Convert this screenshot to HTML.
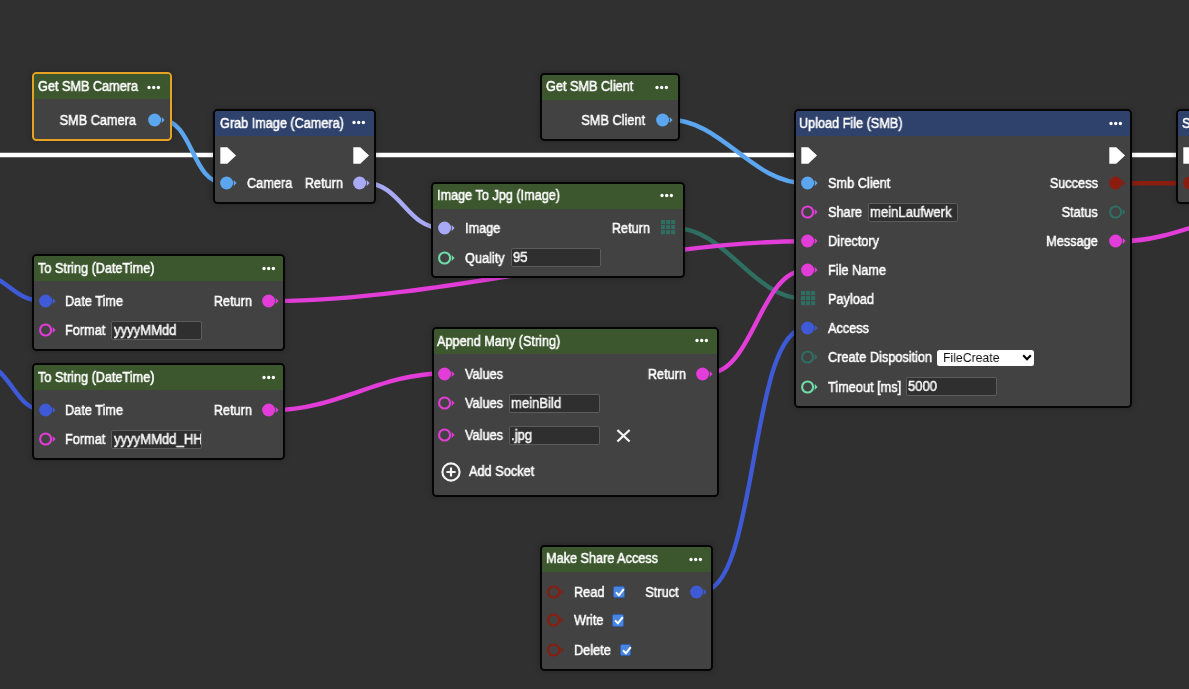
<!DOCTYPE html>
<html><head><meta charset="utf-8"><style>
html,body{margin:0;padding:0;width:1189px;height:689px;overflow:hidden;background:#303030;font-family:"Liberation Sans", sans-serif;}
.wires{position:absolute;left:0;top:0;}
.node{position:absolute;box-sizing:border-box;border:2px solid #050505;border-radius:4.5px;background:#424242;overflow:hidden;box-shadow:0 0 6px rgba(0,0,0,0.25);}
.hdr{position:relative;}
.ttl{position:absolute;top:4.5px;font-size:14.0px;line-height:15px;color:#ffffff;white-space:nowrap;transform:scaleX(0.905);transform-origin:0 0;will-change:transform;-webkit-text-stroke:0.5px currentColor;}
.dots{position:absolute;right:7.4px;top:9.3px;}
.s{position:absolute;overflow:visible;}
.lbl{position:absolute;line-height:20px;white-space:nowrap;transform:scaleX(0.91);transform-origin:0 0;will-change:transform;-webkit-text-stroke:0.5px currentColor;}
.lbl.r{transform-origin:100% 0;}
.inp{position:absolute;box-sizing:border-box;border:1px solid #5c5c5c;border-radius:2px;background:#2f2f2f;}
.inp span{position:absolute;left:0.9px;top:0px;line-height:17px;font-size:14.0px;color:#f6f6f6;white-space:nowrap;transform:scaleX(0.935);transform-origin:0 0;will-change:transform;-webkit-text-stroke:0.5px currentColor;}
.sel{position:absolute;box-sizing:border-box;background:#fff;border-radius:2.5px;}
.sel span{position:absolute;left:5.2px;top:0px;line-height:16px;font-size:13.6px;color:#111;transform:scaleX(0.9);transform-origin:0 0;will-change:transform;}
.cb{position:absolute;width:11.6px;height:12.2px;background:#4a86e0;border-radius:2px;border:0.6px solid #2e5fb0;box-sizing:border-box}
.cb svg{position:absolute;left:-0.3px;top:0;}
</style></head><body>
<svg class="wires" width="1189" height="689" viewBox="0 0 1189 689"><path d="M-10 155 H1189" stroke="#ffffff" stroke-width="4.4" fill="none"/><path d="M1120 183.2 H1189" stroke="#8b1d10" stroke-width="4.6" fill="none"/><path d="M159.8 119.5 C193.782 119.5 190.718 183 224.7 183" stroke="#5ca6f0" stroke-width="4.4" fill="none"/><path d="M364.7 183 C401.29200000000003 183 406.20799999999997 228.4 442.8 228.4" stroke="#a8aaf5" stroke-width="4.4" fill="none"/><path d="M667.8 119.5 C722.2339999999999 119.5 751.2660000000001 183.2 805.7 183.2" stroke="#5ca6f0" stroke-width="4.4" fill="none"/><path d="M673.0 227.8 C726.428 227.8 752.272 299.0 805.7 299.0" stroke="#2f6e61" stroke-width="4.4" fill="none"/><path d="M273.9 301 C438.392 301 641.2080000000001 241.2 805.7 241.2" stroke="#e23dd8" stroke-width="4.4" fill="none"/><path d="M273.9 410.2 C335.31 410.2 381.09 373.5 442.5 373.5" stroke="#e23dd8" stroke-width="4.4" fill="none"/><path d="M707.5 373.5 C753.188 373.5 760.0120000000001 270.3 805.7 270.3" stroke="#e23dd8" stroke-width="4.4" fill="none"/><path d="M701.6 591.5 C758.546 591.5 748.754 328.2 805.7 328.2" stroke="#3e5ad6" stroke-width="4.4" fill="none"/><path d="M1120.7 241.2 C1179.296 241.2 1221.404 208 1280 208" stroke="#e23dd8" stroke-width="4.4" fill="none"/><path d="M-24 274 C8.576 274 11.124000000000002 301 43.7 301" stroke="#3e5ad6" stroke-width="4.4" fill="none"/><path d="M-21 364 C12.472000000000001 364 12.228000000000002 410.6 45.7 410.6" stroke="#3e5ad6" stroke-width="4.4" fill="none"/></svg>
<div class="node" style="left:32px;top:72px;width:139.6px;height:69px;border-color:#e6a323"><div class="hdr" style="height:25.0px;background:#3c572d"><span class="ttl" style="left:4.2px">Get SMB Camera</span></div></div>
<svg class="s" style="left:147.2px;top:84.5px" width="13.6" height="5" viewBox="0 0 13.6 5"><circle cx="2" cy="2.5" r="1.65" fill="#fff"/><circle cx="6.7" cy="2.5" r="1.65" fill="#fff"/><circle cx="11.4" cy="2.5" r="1.65" fill="#fff"/></svg>
<svg class="s" style="left:147.8px;top:110.5px" width="18" height="18" viewBox="0 0 18 18"><circle cx="6.6" cy="9" r="6.5" fill="#5ca6f0"/><path d="M13.7 5.9 L16.6 9 L13.7 12.1 Z" fill="#5ca6f0"/></svg>
<span class="lbl r" style="right:1052.7px;top:109.5px;font-size:14.0px;color:#ffffff">SMB Camera</span>
<div class="node" style="left:213px;top:109px;width:163px;height:95px;border-color:#050505"><div class="hdr" style="height:25.0px;background:#2f426c"><span class="ttl" style="left:5.0px">Grab Image (Camera)</span></div></div>
<svg class="s" style="left:352.3px;top:120.3px" width="13.6" height="5" viewBox="0 0 13.6 5"><circle cx="2" cy="2.5" r="1.65" fill="#fff"/><circle cx="6.7" cy="2.5" r="1.65" fill="#fff"/><circle cx="11.4" cy="2.5" r="1.65" fill="#fff"/></svg>
<svg class="s" style="left:220px;top:146.5px" width="17" height="17" viewBox="0 0 17 17"><path d="M0.3 0.25 H7.3 L16.0 8.5 L7.3 16.75 H0.3 Z" fill="#fff"/></svg>
<svg class="s" style="left:352.5px;top:146.5px" width="17" height="17" viewBox="0 0 17 17"><path d="M0.3 0.25 H7.3 L16.0 8.5 L7.3 16.75 H0.3 Z" fill="#fff"/></svg>
<svg class="s" style="left:220px;top:174px" width="18" height="18" viewBox="0 0 18 18"><circle cx="6.6" cy="9" r="6.5" fill="#5ca6f0"/><path d="M13.7 5.9 L16.6 9 L13.7 12.1 Z" fill="#5ca6f0"/></svg>
<span class="lbl" style="left:246.9px;top:173px;font-size:14.0px;color:#ffffff">Camera</span>
<svg class="s" style="left:352.7px;top:174px" width="18" height="18" viewBox="0 0 18 18"><circle cx="6.6" cy="9" r="6.5" fill="#a8aaf5"/><path d="M13.7 5.9 L16.6 9 L13.7 12.1 Z" fill="#a8aaf5"/></svg>
<span class="lbl r" style="right:846.4px;top:173px;font-size:14.0px;color:#ffffff">Return</span>
<div class="node" style="left:540px;top:72.5px;width:139.5px;height:68.2px;border-color:#050505"><div class="hdr" style="height:25.0px;background:#3c572d"><span class="ttl" style="left:4.2px">Get SMB Client</span></div></div>
<svg class="s" style="left:655.4px;top:84.5px" width="13.6" height="5" viewBox="0 0 13.6 5"><circle cx="2" cy="2.5" r="1.65" fill="#fff"/><circle cx="6.7" cy="2.5" r="1.65" fill="#fff"/><circle cx="11.4" cy="2.5" r="1.65" fill="#fff"/></svg>
<svg class="s" style="left:655.8px;top:110.5px" width="18" height="18" viewBox="0 0 18 18"><circle cx="6.6" cy="9" r="6.5" fill="#5ca6f0"/><path d="M13.7 5.9 L16.6 9 L13.7 12.1 Z" fill="#5ca6f0"/></svg>
<span class="lbl r" style="right:544.1px;top:109.5px;font-size:14.0px;color:#ffffff">SMB Client</span>
<div class="node" style="left:431.4px;top:181.5px;width:253.2px;height:96.7px;border-color:#050505"><div class="hdr" style="height:25.0px;background:#3c572d"><span class="ttl" style="left:3.2px">Image To Jpg (Image)</span></div></div>
<svg class="s" style="left:660.4px;top:193.4px" width="13.6" height="5" viewBox="0 0 13.6 5"><circle cx="2" cy="2.5" r="1.65" fill="#fff"/><circle cx="6.7" cy="2.5" r="1.65" fill="#fff"/><circle cx="11.4" cy="2.5" r="1.65" fill="#fff"/></svg>
<svg class="s" style="left:438.1px;top:219.4px" width="18" height="18" viewBox="0 0 18 18"><circle cx="6.6" cy="9" r="6.5" fill="#a8aaf5"/><path d="M13.7 5.9 L16.6 9 L13.7 12.1 Z" fill="#a8aaf5"/></svg>
<span class="lbl" style="left:464.90000000000003px;top:218.4px;font-size:14.0px;color:#ffffff">Image</span>
<span class="lbl r" style="right:538.5px;top:218.4px;font-size:14.0px;color:#ffffff">Return</span>
<svg class="s" style="left:661px;top:220.1px" width="15" height="15" viewBox="0 0 15 15"><rect x="0.0" y="0.0" width="4.1" height="4.1" fill="#2f6e61"/><rect x="5.05" y="0.0" width="4.1" height="4.1" fill="#2f6e61"/><rect x="10.1" y="0.0" width="4.1" height="4.1" fill="#2f6e61"/><rect x="0.0" y="5.05" width="4.1" height="4.1" fill="#2f6e61"/><rect x="5.05" y="5.05" width="4.1" height="4.1" fill="#2f6e61"/><rect x="10.1" y="5.05" width="4.1" height="4.1" fill="#2f6e61"/><rect x="0.0" y="10.1" width="4.1" height="4.1" fill="#2f6e61"/><rect x="5.05" y="10.1" width="4.1" height="4.1" fill="#2f6e61"/><rect x="10.1" y="10.1" width="4.1" height="4.1" fill="#2f6e61"/></svg>
<svg class="s" style="left:438.1px;top:248.60000000000002px" width="18" height="18" viewBox="0 0 18 18"><circle cx="6.6" cy="9" r="5.5" fill="none" stroke="#6fdda8" stroke-width="2.1"/><path d="M13.7 5.9 L16.6 9 L13.7 12.1 Z" fill="#6fdda8"/></svg>
<span class="lbl" style="left:464.90000000000003px;top:247.60000000000002px;font-size:14.0px;color:#ffffff">Quality</span>
<div class="inp" style="left:511.1px;top:248.4px;width:90.2px;height:18.6px;overflow:hidden"><span style="margin-left:0px">95</span></div>
<div class="node" style="left:794.3px;top:109.1px;width:337.7px;height:298.6px;border-color:#050505"><div class="hdr" style="height:25.0px;background:#2f426c"><span class="ttl" style="left:3.2px">Upload File (SMB)</span></div></div>
<svg class="s" style="left:1108.6px;top:120.5px" width="13.6" height="5" viewBox="0 0 13.6 5"><circle cx="2" cy="2.5" r="1.65" fill="#fff"/><circle cx="6.7" cy="2.5" r="1.65" fill="#fff"/><circle cx="11.4" cy="2.5" r="1.65" fill="#fff"/></svg>
<svg class="s" style="left:801px;top:146.5px" width="17" height="17" viewBox="0 0 17 17"><path d="M0.3 0.25 H7.3 L16.0 8.5 L7.3 16.75 H0.3 Z" fill="#fff"/></svg>
<svg class="s" style="left:1108.5px;top:146.5px" width="17" height="17" viewBox="0 0 17 17"><path d="M0.3 0.25 H7.3 L16.0 8.5 L7.3 16.75 H0.3 Z" fill="#fff"/></svg>
<svg class="s" style="left:801px;top:174.2px" width="18" height="18" viewBox="0 0 18 18"><circle cx="6.6" cy="9" r="6.5" fill="#5ca6f0"/><path d="M13.7 5.9 L16.6 9 L13.7 12.1 Z" fill="#5ca6f0"/></svg>
<span class="lbl" style="left:827.5999999999999px;top:173.2px;font-size:14.0px;color:#ffffff">Smb Client</span>
<svg class="s" style="left:801px;top:203.2px" width="18" height="18" viewBox="0 0 18 18"><circle cx="6.6" cy="9" r="5.5" fill="none" stroke="#e23dd8" stroke-width="2.1"/><path d="M13.7 5.9 L16.6 9 L13.7 12.1 Z" fill="#e23dd8"/></svg>
<span class="lbl" style="left:827.5999999999999px;top:202.2px;font-size:14.0px;color:#ffffff">Share</span>
<div class="inp" style="left:867.7px;top:203px;width:90.5px;height:19px;overflow:hidden"><span style="margin-left:0px">meinLaufwerk</span></div>
<svg class="s" style="left:801px;top:232.2px" width="18" height="18" viewBox="0 0 18 18"><circle cx="6.6" cy="9" r="6.5" fill="#e23dd8"/><path d="M13.7 5.9 L16.6 9 L13.7 12.1 Z" fill="#e23dd8"/></svg>
<span class="lbl" style="left:827.5999999999999px;top:231.2px;font-size:14.0px;color:#ffffff">Directory</span>
<svg class="s" style="left:801px;top:261.3px" width="18" height="18" viewBox="0 0 18 18"><circle cx="6.6" cy="9" r="6.5" fill="#e23dd8"/><path d="M13.7 5.9 L16.6 9 L13.7 12.1 Z" fill="#e23dd8"/></svg>
<span class="lbl" style="left:827.5999999999999px;top:260.3px;font-size:14.0px;color:#ffffff">File Name</span>
<svg class="s" style="left:801px;top:290.79999999999995px" width="15" height="15" viewBox="0 0 15 15"><rect x="0.0" y="0.0" width="4.1" height="4.1" fill="#2f6e61"/><rect x="5.05" y="0.0" width="4.1" height="4.1" fill="#2f6e61"/><rect x="10.1" y="0.0" width="4.1" height="4.1" fill="#2f6e61"/><rect x="0.0" y="5.05" width="4.1" height="4.1" fill="#2f6e61"/><rect x="5.05" y="5.05" width="4.1" height="4.1" fill="#2f6e61"/><rect x="10.1" y="5.05" width="4.1" height="4.1" fill="#2f6e61"/><rect x="0.0" y="10.1" width="4.1" height="4.1" fill="#2f6e61"/><rect x="5.05" y="10.1" width="4.1" height="4.1" fill="#2f6e61"/><rect x="10.1" y="10.1" width="4.1" height="4.1" fill="#2f6e61"/></svg>
<span class="lbl" style="left:827.5999999999999px;top:289.3px;font-size:14.0px;color:#ffffff">Payload</span>
<svg class="s" style="left:801px;top:319.2px" width="18" height="18" viewBox="0 0 18 18"><circle cx="6.6" cy="9" r="6.5" fill="#3e5ad6"/><path d="M13.7 5.9 L16.6 9 L13.7 12.1 Z" fill="#3e5ad6"/></svg>
<span class="lbl" style="left:827.5999999999999px;top:318.2px;font-size:14.0px;color:#ffffff">Access</span>
<svg class="s" style="left:801px;top:348.4px" width="18" height="18" viewBox="0 0 18 18"><circle cx="6.6" cy="9" r="5.5" fill="none" stroke="#2f6e61" stroke-width="2.1"/><path d="M13.7 5.9 L16.6 9 L13.7 12.1 Z" fill="#2f6e61"/></svg>
<span class="lbl" style="left:827.5999999999999px;top:347.4px;font-size:14.0px;color:#ffffff">Create Disposition</span>
<div class="sel" style="left:937.4px;top:349.6px;width:97px;height:16.6px"><span>FileCreate</span><svg style="position:absolute;right:2.4px;top:4.6px" width="10" height="7" viewBox="0 0 10 7"><path d="M1.2 1.3 L5 5.2 L8.8 1.3" stroke="#000" stroke-width="2.1" fill="none"/></svg></div>
<svg class="s" style="left:801px;top:377.6px" width="18" height="18" viewBox="0 0 18 18"><circle cx="6.6" cy="9" r="5.5" fill="none" stroke="#6fdda8" stroke-width="2.1"/><path d="M13.7 5.9 L16.6 9 L13.7 12.1 Z" fill="#6fdda8"/></svg>
<span class="lbl" style="left:827.5999999999999px;top:376.6px;font-size:14.0px;color:#ffffff">Timeout [ms]</span>
<div class="inp" style="left:906.3px;top:377.2px;width:90.5px;height:18.5px;overflow:hidden"><span style="margin-left:0px">5000</span></div>
<svg class="s" style="left:1108.7px;top:174.2px" width="18" height="18" viewBox="0 0 18 18"><circle cx="6.6" cy="9" r="6.5" fill="#8b1d10"/><path d="M13.7 5.9 L16.6 9 L13.7 12.1 Z" fill="#8b1d10"/></svg>
<span class="lbl r" style="right:91.40000000000009px;top:173.2px;font-size:14.0px;color:#ffffff">Success</span>
<svg class="s" style="left:1108.7px;top:203.2px" width="18" height="18" viewBox="0 0 18 18"><circle cx="6.6" cy="9" r="5.5" fill="none" stroke="#2f6e61" stroke-width="2.1"/><path d="M13.7 5.9 L16.6 9 L13.7 12.1 Z" fill="#2f6e61"/></svg>
<span class="lbl r" style="right:91.40000000000009px;top:202.2px;font-size:14.0px;color:#ffffff">Status</span>
<svg class="s" style="left:1108.7px;top:232.2px" width="18" height="18" viewBox="0 0 18 18"><circle cx="6.6" cy="9" r="6.5" fill="#e23dd8"/><path d="M13.7 5.9 L16.6 9 L13.7 12.1 Z" fill="#e23dd8"/></svg>
<span class="lbl r" style="right:91.40000000000009px;top:231.2px;font-size:14.0px;color:#ffffff">Message</span>
<div class="node" style="left:1175.6px;top:109px;width:60px;height:94.5px;border-color:#050505"><div class="hdr" style="height:25.0px;background:#2f426c"><span class="ttl" style="left:4.2px">S</span></div></div>
<svg class="s" style="left:1182.5px;top:146.5px" width="17" height="17" viewBox="0 0 17 17"><path d="M0.3 0.25 H7.3 L16.0 8.5 L7.3 16.75 H0.3 Z" fill="#fff"/></svg>
<svg class="s" style="left:1182.5px;top:174.2px" width="18" height="18" viewBox="0 0 18 18"><circle cx="6.6" cy="9" r="6.5" fill="#8b1d10"/><path d="M13.7 5.9 L16.6 9 L13.7 12.1 Z" fill="#8b1d10"/></svg>
<div class="node" style="left:31.9px;top:254.4px;width:253.3px;height:96.9px;border-color:#050505"><div class="hdr" style="height:25.0px;background:#3c572d"><span class="ttl" style="left:4.2px">To String (DateTime)</span></div></div>
<svg class="s" style="left:262.1px;top:266.3px" width="13.6" height="5" viewBox="0 0 13.6 5"><circle cx="2" cy="2.5" r="1.65" fill="#fff"/><circle cx="6.7" cy="2.5" r="1.65" fill="#fff"/><circle cx="11.4" cy="2.5" r="1.65" fill="#fff"/></svg>
<svg class="s" style="left:39px;top:292.0px" width="18" height="18" viewBox="0 0 18 18"><circle cx="6.6" cy="9" r="6.5" fill="#3e5ad6"/><path d="M13.7 5.9 L16.6 9 L13.7 12.1 Z" fill="#3e5ad6"/></svg>
<span class="lbl" style="left:65.1px;top:291.0px;font-size:14.0px;color:#ffffff">Date Time</span>
<svg class="s" style="left:261.9px;top:292.0px" width="18" height="18" viewBox="0 0 18 18"><circle cx="6.6" cy="9" r="6.5" fill="#e23dd8"/><path d="M13.7 5.9 L16.6 9 L13.7 12.1 Z" fill="#e23dd8"/></svg>
<span class="lbl r" style="right:937.3px;top:291.0px;font-size:14.0px;color:#ffffff">Return</span>
<svg class="s" style="left:39px;top:321.0px" width="18" height="18" viewBox="0 0 18 18"><circle cx="6.6" cy="9" r="5.5" fill="none" stroke="#e23dd8" stroke-width="2.1"/><path d="M13.7 5.9 L16.6 9 L13.7 12.1 Z" fill="#e23dd8"/></svg>
<span class="lbl" style="left:65.1px;top:320.0px;font-size:14.0px;color:#ffffff">Format</span>
<div class="inp" style="left:111.1px;top:321.1px;width:90.8px;height:18.8px;overflow:hidden"><span style="margin-left:1.2px">yyyyMMdd</span></div>
<div class="node" style="left:31.9px;top:363.1px;width:253.3px;height:96.9px;border-color:#050505"><div class="hdr" style="height:25.0px;background:#3c572d"><span class="ttl" style="left:4.2px">To String (DateTime)</span></div></div>
<svg class="s" style="left:262.1px;top:375.0px" width="13.6" height="5" viewBox="0 0 13.6 5"><circle cx="2" cy="2.5" r="1.65" fill="#fff"/><circle cx="6.7" cy="2.5" r="1.65" fill="#fff"/><circle cx="11.4" cy="2.5" r="1.65" fill="#fff"/></svg>
<svg class="s" style="left:39px;top:400.70000000000005px" width="18" height="18" viewBox="0 0 18 18"><circle cx="6.6" cy="9" r="6.5" fill="#3e5ad6"/><path d="M13.7 5.9 L16.6 9 L13.7 12.1 Z" fill="#3e5ad6"/></svg>
<span class="lbl" style="left:65.1px;top:399.70000000000005px;font-size:14.0px;color:#ffffff">Date Time</span>
<svg class="s" style="left:261.9px;top:400.70000000000005px" width="18" height="18" viewBox="0 0 18 18"><circle cx="6.6" cy="9" r="6.5" fill="#e23dd8"/><path d="M13.7 5.9 L16.6 9 L13.7 12.1 Z" fill="#e23dd8"/></svg>
<span class="lbl r" style="right:937.3px;top:399.70000000000005px;font-size:14.0px;color:#ffffff">Return</span>
<svg class="s" style="left:39px;top:429.70000000000005px" width="18" height="18" viewBox="0 0 18 18"><circle cx="6.6" cy="9" r="5.5" fill="none" stroke="#e23dd8" stroke-width="2.1"/><path d="M13.7 5.9 L16.6 9 L13.7 12.1 Z" fill="#e23dd8"/></svg>
<span class="lbl" style="left:65.1px;top:428.70000000000005px;font-size:14.0px;color:#ffffff">Format</span>
<div class="inp" style="left:111.1px;top:429.80000000000007px;width:90.8px;height:18.8px;overflow:hidden"><span style="margin-left:1.2px">yyyyMMdd_HH</span></div>
<div class="node" style="left:431.5px;top:327px;width:287.7px;height:169.6px;border-color:#050505"><div class="hdr" style="height:25.0px;background:#3c572d"><span class="ttl" style="left:3.2px">Append Many (String)</span></div></div>
<svg class="s" style="left:695.1px;top:338.4px" width="13.6" height="5" viewBox="0 0 13.6 5"><circle cx="2" cy="2.5" r="1.65" fill="#fff"/><circle cx="6.7" cy="2.5" r="1.65" fill="#fff"/><circle cx="11.4" cy="2.5" r="1.65" fill="#fff"/></svg>
<svg class="s" style="left:437.8px;top:364.5px" width="18" height="18" viewBox="0 0 18 18"><circle cx="6.6" cy="9" r="6.5" fill="#e23dd8"/><path d="M13.7 5.9 L16.6 9 L13.7 12.1 Z" fill="#e23dd8"/></svg>
<span class="lbl" style="left:464.7px;top:363.5px;font-size:14.0px;color:#ffffff">Values</span>
<svg class="s" style="left:695.5px;top:364.5px" width="18" height="18" viewBox="0 0 18 18"><circle cx="6.6" cy="9" r="6.5" fill="#e23dd8"/><path d="M13.7 5.9 L16.6 9 L13.7 12.1 Z" fill="#e23dd8"/></svg>
<span class="lbl r" style="right:503.4000000000001px;top:363.5px;font-size:14.0px;color:#ffffff">Return</span>
<svg class="s" style="left:437.8px;top:393.5px" width="18" height="18" viewBox="0 0 18 18"><circle cx="6.6" cy="9" r="5.5" fill="none" stroke="#e23dd8" stroke-width="2.1"/><path d="M13.7 5.9 L16.6 9 L13.7 12.1 Z" fill="#e23dd8"/></svg>
<span class="lbl" style="left:464.7px;top:392.5px;font-size:14.0px;color:#ffffff">Values</span>
<div class="inp" style="left:509.3px;top:393.9px;width:90.3px;height:18.8px;overflow:hidden"><span style="margin-left:0px">meinBild</span></div>
<svg class="s" style="left:437.8px;top:426.4px" width="18" height="18" viewBox="0 0 18 18"><circle cx="6.6" cy="9" r="5.5" fill="none" stroke="#e23dd8" stroke-width="2.1"/><path d="M13.7 5.9 L16.6 9 L13.7 12.1 Z" fill="#e23dd8"/></svg>
<span class="lbl" style="left:464.7px;top:425.4px;font-size:14.0px;color:#ffffff">Values</span>
<div class="inp" style="left:509.3px;top:426.3px;width:90.3px;height:19px;overflow:hidden"><span style="margin-left:0px">.jpg</span></div>
<svg class="s" style="left:615.8px;top:428.6px" width="15" height="13.5" viewBox="0 0 15 13.5"><path d="M1.4 1.0 L13.6 12.5 M13.6 1.0 L1.4 12.5" stroke="#f4f4f4" stroke-width="2.3"/></svg>
<svg class="s" style="left:440.9px;top:461.8px" width="20" height="20" viewBox="0 0 20 20"><circle cx="10" cy="10" r="8.6" fill="none" stroke="#f4f4f4" stroke-width="2.1"/><path d="M10 5.4 V14.6 M5.4 10 H14.6" stroke="#f4f4f4" stroke-width="2.2"/></svg>
<span class="lbl" style="left:468.90000000000003px;top:460.6px;font-size:14.0px;color:#ffffff">Add Socket</span>
<div class="node" style="left:540.4px;top:544.7px;width:172.6px;height:125.9px;border-color:#050505"><div class="hdr" style="height:25.0px;background:#3c572d"><span class="ttl" style="left:3.2px">Make Share Access</span></div></div>
<svg class="s" style="left:689.0px;top:556.5px" width="13.6" height="5" viewBox="0 0 13.6 5"><circle cx="2" cy="2.5" r="1.65" fill="#fff"/><circle cx="6.7" cy="2.5" r="1.65" fill="#fff"/><circle cx="11.4" cy="2.5" r="1.65" fill="#fff"/></svg>
<svg class="s" style="left:547.3px;top:582.5px" width="18" height="18" viewBox="0 0 18 18"><circle cx="6.6" cy="9" r="5.5" fill="none" stroke="#8b1d10" stroke-width="2.1"/><path d="M13.7 5.9 L16.6 9 L13.7 12.1 Z" fill="#8b1d10"/></svg>
<span class="lbl" style="left:573.8px;top:581.5px;font-size:14.0px;color:#ffffff">Read</span>
<div class="cb" style="left:613.3px;top:585.5px"><svg width="12" height="12" viewBox="0 0 12 12"><path d="M2.0 5.4 L4.9 8.3 L9.8 2.2" stroke="#fff" stroke-width="2.0" fill="none"/></svg></div>
<svg class="s" style="left:547.3px;top:611.4px" width="18" height="18" viewBox="0 0 18 18"><circle cx="6.6" cy="9" r="5.5" fill="none" stroke="#8b1d10" stroke-width="2.1"/><path d="M13.7 5.9 L16.6 9 L13.7 12.1 Z" fill="#8b1d10"/></svg>
<span class="lbl" style="left:573.8px;top:610.4px;font-size:14.0px;color:#ffffff">Write</span>
<div class="cb" style="left:612.3px;top:614.4px"><svg width="12" height="12" viewBox="0 0 12 12"><path d="M2.0 5.4 L4.9 8.3 L9.8 2.2" stroke="#fff" stroke-width="2.0" fill="none"/></svg></div>
<svg class="s" style="left:547.3px;top:640.8px" width="18" height="18" viewBox="0 0 18 18"><circle cx="6.6" cy="9" r="5.5" fill="none" stroke="#8b1d10" stroke-width="2.1"/><path d="M13.7 5.9 L16.6 9 L13.7 12.1 Z" fill="#8b1d10"/></svg>
<span class="lbl" style="left:573.8px;top:639.8px;font-size:14.0px;color:#ffffff">Delete</span>
<div class="cb" style="left:619.8px;top:643.8px"><svg width="12" height="12" viewBox="0 0 12 12"><path d="M2.0 5.4 L4.9 8.3 L9.8 2.2" stroke="#fff" stroke-width="2.0" fill="none"/></svg></div>
<svg class="s" style="left:689.6px;top:582.5px" width="18" height="18" viewBox="0 0 18 18"><circle cx="6.6" cy="9" r="6.5" fill="#3e5ad6"/><path d="M13.7 5.9 L16.6 9 L13.7 12.1 Z" fill="#3e5ad6"/></svg>
<span class="lbl r" style="right:510.30000000000007px;top:581.5px;font-size:14.0px;color:#ffffff">Struct</span>
</body></html>
